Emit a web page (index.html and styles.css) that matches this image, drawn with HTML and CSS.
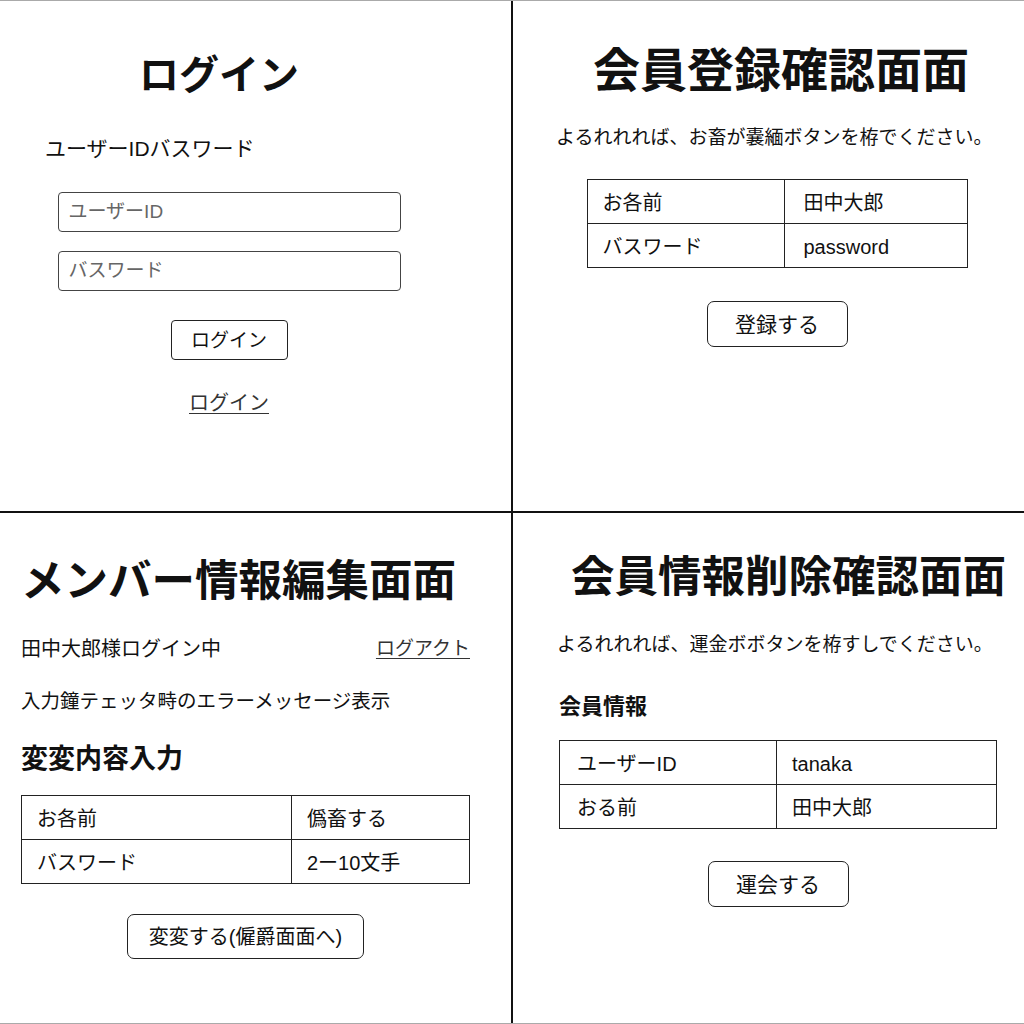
FILE: index.html
```html
<!doctype html>
<html lang="ja">
<head>
  <meta charset="UTF-8">
  <meta name="viewport" content="width=device-width, initial-scale=1.0">
  <title>画面遷移ワイヤーフレーム</title>
  <link rel="stylesheet" href="styles.css">
</head>
<body>
<div class="board">

  <!-- ログイン -->
  <section class="screen screen--login">
    <h1 class="screen__title login__title">ログイン</h1>
    <p class="login__label">ユーザーIDバスワード</p>
    <input class="field" type="text" placeholder="ユーザーID">
    <input class="field field--second" type="password" placeholder="バスワード">
    <button class="btn login__btn" type="button">ログイン</button>
    <a class="link login__link" href="#">ログイン</a>
  </section>

  <!-- 会員登録確認 -->
  <section class="screen screen--confirm">
    <h1 class="screen__title confirm__title">会員登録確認面面</h1>
    <p class="lead">よるれれれば、お畜が嚢緬ボタンを栫でください。</p>
    <table class="info confirm__table">
      <tr><td class="info__key">お各前</td><td class="info__val">田中大郎</td></tr>
      <tr><td class="info__key">バスワード</td><td class="info__val">password</td></tr>
    </table>
    <button class="btn btn--wide confirm__btn" type="button">登録する</button>
  </section>

  <!-- メンバー情報編集 -->
  <section class="screen screen--edit">
    <h1 class="screen__title edit__title">メンバー情報編集面面</h1>
    <div class="edit__status">
      <span>田中大郎様ログイン中</span>
      <a class="link" href="#">ログアクト</a>
    </div>
    <p class="edit__error">入力鐘テェッタ畤のエラーメッセージ表示</p>
    <h2 class="edit__sub">変変内容入力</h2>
    <table class="info edit__table">
      <tr><td class="info__key">お各前</td><td class="info__val">僞畜する</td></tr>
      <tr><td class="info__key">バスワード</td><td class="info__val">2ー10文手</td></tr>
    </table>
    <button class="btn edit__btn" type="button">変変する(僱爵面面へ)</button>
  </section>

  <!-- 会員情報削除確認 -->
  <section class="screen screen--delete">
    <h1 class="screen__title delete__title">会員情報削除確認面面</h1>
    <p class="lead">よるれれれば、運金ボボタンを栫すしでください。</p>
    <h2 class="delete__sub">会員情報</h2>
    <table class="info delete__table">
      <tr><td class="info__key">ユーザーID</td><td class="info__val">tanaka</td></tr>
      <tr><td class="info__key">おる前</td><td class="info__val">田中大郎</td></tr>
    </table>
    <button class="btn btn--wide delete__btn" type="button">運会する</button>
  </section>

</div>
</body>
</html>
```

FILE: styles.css
```css
body {
  margin: 0;
  font-family: "Liberation Sans", "Noto Sans CJK JP", sans-serif;
  color: #111;
  background: #fff;
}

/* Board: four screens split by black lines */

.board {
  box-sizing: border-box;
  width: 1024px;
  height: 1024px;
  display: grid;
  grid-template-columns: 511px 511px;
  grid-template-rows: 510px 510px;
  gap: 2px;
  background: #111;
  border-top: 1px solid #aaa;
  border-bottom: 1px solid #aaa;
}

.screen {
  display: flex;
  flex-direction: column;
  align-items: flex-start;
  background: #fff;
  overflow: hidden;
}

.screen__title {
  margin: 0;
  font-weight: 700;
  line-height: 1;
  white-space: nowrap;
}

p,
h2 {
  margin: 0;
}

.lead {
  margin-top: 31px;
  font-size: 19px;
  line-height: 24px;
  white-space: nowrap;
}

/* Shared controls */

.btn {
  box-sizing: border-box;
  align-self: center;
  height: 40px;
  padding: 0 19px;
  border: 1px solid #222;
  border-radius: 4px;
  background: #fff;
  color: #111;
  font: inherit;
  font-size: 20px;
  line-height: 1;
}

.btn--wide {
  width: 141px;
  height: 46px;
  border-radius: 7px;
  font-size: 21px;
}

.link {
  color: #333;
  text-decoration: underline;
  text-underline-offset: 3px;
  text-decoration-thickness: 1px;
}

.info {
  border-collapse: collapse;
  font-size: 20px;
}

.info td {
  padding: 4px 0 0;
  border: 1px solid #222;
  line-height: 39px;
  white-space: nowrap;
}

.info__key {
  padding-left: 15px !important;
}

.info__val {
  padding-left: 19px !important;
}

/* Login */

.screen--login {
  padding: 54px 98px 0 45px;
}

.login__title {
  align-self: stretch;
  padding-right: 20px;
  font-size: 40px;
  line-height: 40px;
  text-align: center;
}

.login__label {
  margin-top: 42px;
  font-size: 21px;
  line-height: 24px;
}

.field {
  box-sizing: border-box;
  align-self: center;
  width: 343px;
  height: 40px;
  margin-top: 31px;
  padding: 0 10px;
  border: 1px solid #444;
  border-radius: 4px;
  font: inherit;
  font-size: 19px;
}

.field::placeholder {
  color: #666;
}

.field--second {
  margin-top: 19px;
}

.login__btn {
  width: 117px;
  margin-top: 29px;
  font-size: 19px;
}

.login__link {
  align-self: center;
  margin-top: 31px;
  font-size: 20px;
  line-height: 24px;
}

/* Register confirm */

.screen--confirm {
  padding: 46px 26px 0 43px;
}

.confirm__title {
  margin-left: 37px;
  font-size: 47px;
  line-height: 48px;
}

.confirm__table {
  align-self: center;
  width: 381px;
  margin-top: 29px;
}

.confirm__table .info__key {
  width: 181px;
}

.confirm__btn {
  margin-top: 33px;
}

/* Member edit */

.screen--edit {
  padding: 45px 41px 0 21px;
}

.edit__title {
  font-size: 43.5px;
  line-height: 46px;
}

.edit__status {
  align-self: stretch;
  display: flex;
  justify-content: space-between;
  margin-top: 33px;
  font-size: 20px;
  line-height: 24px;
}

.edit__status .link {
  font-size: 19px;
}

.edit__error {
  margin-top: 28px;
  font-size: 19.5px;
  line-height: 24px;
  white-space: nowrap;
}

.edit__sub {
  margin-top: 30px;
  font-size: 27px;
  font-weight: 700;
  line-height: 32px;
}

.edit__table {
  align-self: stretch;
  margin-top: 20px;
}

.edit__table .info__key {
  width: 254px;
}

.edit__table .info__val {
  padding-left: 15px !important;
}

.edit__btn {
  height: 45px;
  margin-top: 30px;
  padding: 0 21px;
  border-radius: 7px;
}

/* Member delete confirm */

.screen--delete {
  padding: 41px 27px 0 46px;
}

.delete__title {
  margin-left: 12px;
  font-size: 43.5px;
  line-height: 46px;
}

.screen--delete .lead {
  margin-left: -2px;
  margin-top: 33px;
}

.delete__sub {
  margin-top: 37px;
  font-size: 22px;
  font-weight: 700;
  line-height: 26px;
}

.delete__table {
  align-self: stretch;
  margin-top: 20px;
}

.delete__table .info__key {
  width: 199px;
  padding-left: 17px !important;
}

.delete__table .info__val {
  padding-left: 15px !important;
}

.delete__btn {
  margin-top: 32px;
}
```
